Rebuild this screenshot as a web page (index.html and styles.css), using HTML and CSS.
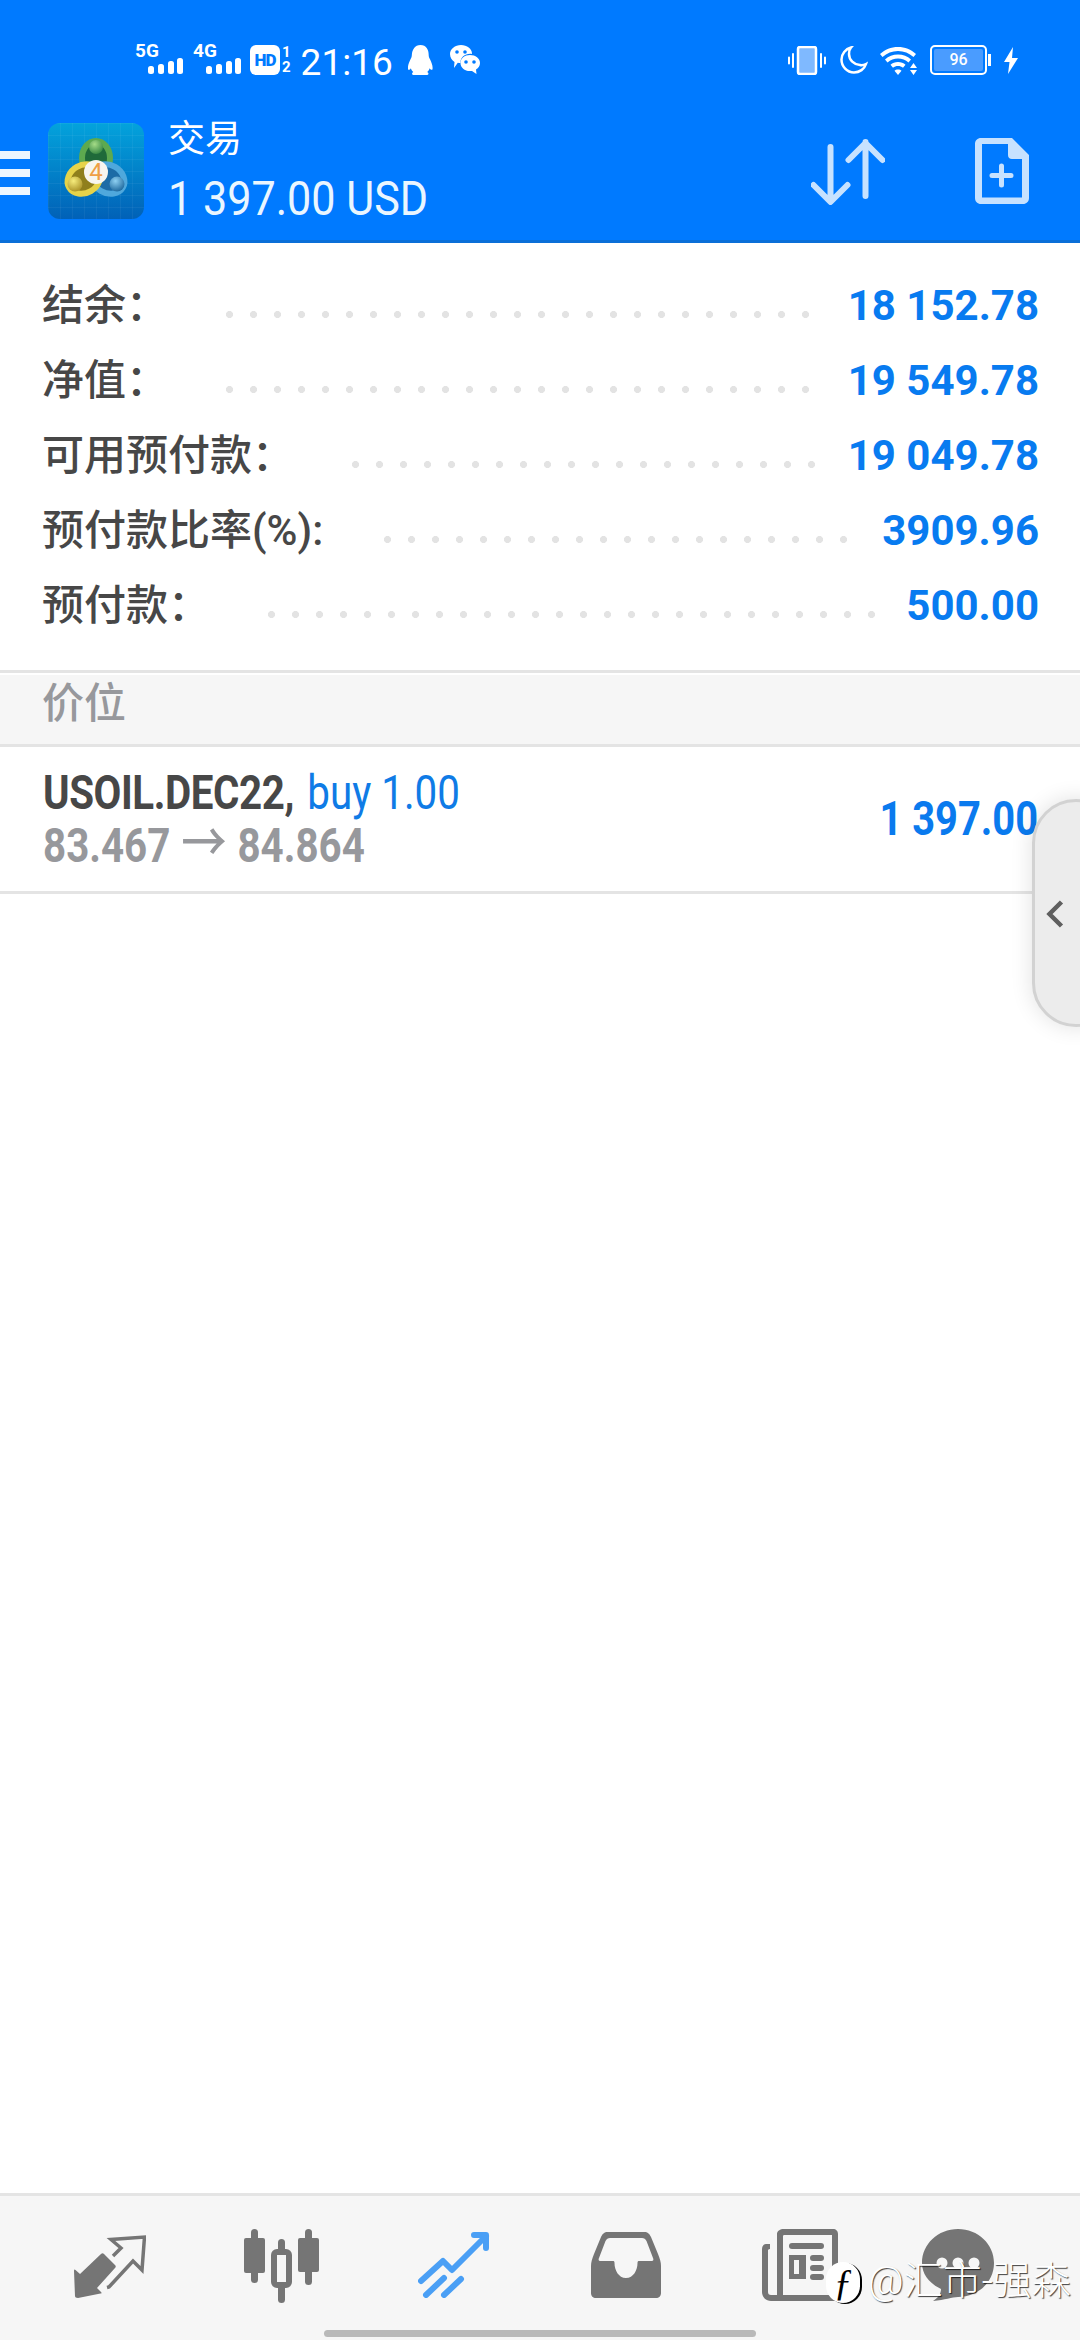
FILE: index.html
```html
<!DOCTYPE html>
<html>
<head>
  <meta http-equiv="CONTENT-TYPE" content="text/html; charset=UTF-8">
  <link rel="stylesheet" href="styles.css">
  <title>交易</title>
</head>
<body>
  <div class="phone">
    <header class="top">
      <div class="status">
        <div class="status-left">
          <div class="net"><span class="net-name">5G</span><svg class="bars" width="35" height="16" viewBox="0 0 35 16"><g fill="#fff"><rect x="0" y="8" width="6" height="8" rx="2.500"/><rect x="10" y="6" width="6" height="10" rx="2.500"/><rect x="20" y="3" width="6" height="13" rx="2.500"/><rect x="29" y="0" width="6" height="16" rx="2.500"/></g></svg></div>
          <div class="net net2"><span class="net-name">4G</span><svg class="bars" width="35" height="16" viewBox="0 0 35 16"><g fill="#fff"><rect x="0" y="8" width="6" height="8" rx="2.500"/><rect x="10" y="6" width="6" height="10" rx="2.500"/><rect x="20" y="3" width="6" height="13" rx="2.500"/><rect x="29" y="0" width="6" height="16" rx="2.500"/></g></svg></div>
          <div class="hd"><span class="hd-box">HD</span><span class="hd-nums"><span>1</span><span>2</span></span></div>
          <span class="clock">21:16</span>
          <svg class="ic-qq" width="25" height="30" viewBox="0 0 26 31"><path fill="#fff" d="M13 0c6 0 8.500 5 8.500 10 0 2 .5 3 1.500 5 1.500 3 3 7 2.500 10-.5 1.500-2 .5-3-1-.5 2-1.500 3-2.500 4 1.500 1 2 2.500 0 3H5.500c-2-.5-1.500-2 0-3-1-1-2-2-2.500-4-1 1.500-2.500 2.500-3 1C-.5 22 1 18 2.500 15c1-2 1.500-3 1.500-5C4.500 5 7 0 13 0z"/></svg>
          <svg class="ic-wechat" width="30" height="30" viewBox="0 0 30 30"><path fill="#fff" d="M11 0c6 0 11 4 11 8.500v.5c-6-1-12 3-11.500 9-1 0-1.800 0-2.700-.2L4 23l.5-6C2 15.500 0 12.500 0 9 0 4 5 0 11 0z"/><circle cx="7" cy="7" r="1.800" fill="#007aff"/><circle cx="15" cy="7" r="1.800" fill="#007aff"/><path fill="#fff" d="M20 10c5.500 0 10 3.500 10 8 0 2.800-1.500 5-4 6.500l.5 4.500-4.500-3c-.6.100-1.300.100-2 .1-5.500 0-9.500-3.600-9.500-8.100S14.500 10 20 10z"/><circle cx="16" cy="17" r="1.800" fill="#007aff"/><circle cx="24" cy="17" r="1.800" fill="#007aff"/></svg>
        </div>
        <div class="status-right">
          <svg class="ic-vib" width="38" height="29" viewBox="0 0 38 29"><rect x="10" y="1" width="18" height="27" rx="2" fill="#7fb9ff" stroke="#fff" stroke-width="2.500"/><path d="M5 8v13M1 11.500v6M33 8v13M37 11.500v6" stroke="#fff" stroke-width="2" stroke-linecap="round" fill="none"/></svg>
          <svg class="ic-moon" width="28" height="28" viewBox="0 0 28 28"><path fill="none" stroke="#fff" stroke-width="2.500" d="M11 1.500C5.500 3 1.500 8 1.500 13.500c0 7 5.500 13 12.500 13 5.500 0 10.500-3.500 12-8.500-2 1-4 1.500-6 1-6-.5-11-5-11-11 0-2.500.7-5 2-6.500z"/></svg>
          <svg class="ic-wifi" width="38" height="29" viewBox="0 0 38 29"><path fill="#fff" d="M18 0c7 0 13 2.500 18 7l-2.500 3C29 6 24 4 18 4S7 6 2.500 10L0 7C5 2.500 11 0 18 0z"/><path fill="#fff" d="M18 7.500c5 0 9.500 1.800 13 5L28.500 15.500C25.500 13 22 11.500 18 11.500S10.500 13 7.500 15.500L5 12.500c3.500-3.200 8-5 13-5z"/><path fill="#fff" d="M18 15c3 0 5.500 1 7.500 2.800L23 20.800c-1.500-1.200-3-1.800-5-1.800s-3.500.6-5 1.800l-2.500-3C12.500 16 15 15 18 15z"/><path fill="#fff" d="M18 22.500c1.500 0 2.700.4 3.500 1.200L18 28l-3.500-4.300c.8-.8 2-1.200 3.500-1.200z"/><path fill="#fff" d="M33.500 16l3.500 5h-7zM30 23h7l-3.500 5z"/></svg>
          <div class="battery"><span class="batt-box"><span class="batt-fill">96</span></span><span class="batt-tip"></span></div>
          <svg class="ic-bolt" width="14" height="27" viewBox="0 0 14 27"><path fill="#fff" d="M9 0L0 15h5.500L4 27l10-16H8z"/></svg>
        </div>
      </div>
      <div class="toolbar">
        <div class="menu"><span></span><span></span><span></span></div>
        <svg class="logo" width="96" height="96" viewBox="0 0 96 96">
          <defs>
            <linearGradient id="logoBg" x1="0" y1="0" x2="0" y2="1"><stop offset="0" stop-color="#03a3dc"/><stop offset="1" stop-color="#0161b7"/></linearGradient>
            <pattern id="logoGrid" width="12" height="12" patternUnits="userSpaceOnUse"><path d="M12 0H0V12" fill="none" stroke="#fff" stroke-opacity=".09" stroke-width="1"/></pattern>
            <radialGradient id="ballGreen" cx=".4" cy=".3" r=".8"><stop offset="0" stop-color="#a5dc87"/><stop offset="1" stop-color="#2c7f3d"/></radialGradient>
            <radialGradient id="ballYellow" cx=".4" cy=".3" r=".8"><stop offset="0" stop-color="#f6ec7c"/><stop offset="1" stop-color="#a38a1f"/></radialGradient>
            <radialGradient id="ballBlue" cx=".4" cy=".3" r=".8"><stop offset="0" stop-color="#8ed0f2"/><stop offset="1" stop-color="#125d94"/></radialGradient>
          </defs>
          <rect width="96" height="96" rx="12" fill="url(#logoBg)"/>
          <rect width="96" height="96" rx="12" fill="url(#logoGrid)"/>
          <ellipse cx="48" cy="35" rx="14" ry="17" fill="#1f6a3a" stroke="#5da94f" stroke-width="6"/>
          <ellipse cx="48" cy="35" rx="14" ry="17" fill="#1c6ba6" stroke="#4fa8dc" stroke-width="6" transform="rotate(120 48 49)"/>
          <ellipse cx="48" cy="35" rx="14" ry="17" fill="#8f7f1c" stroke="#e6d34a" stroke-width="6" transform="rotate(240 48 49)"/>
          <circle cx="48" cy="24" r="7" fill="url(#ballGreen)"/>
          <circle cx="27" cy="61" r="7.500" fill="url(#ballYellow)"/>
          <circle cx="69" cy="61" r="7.500" fill="url(#ballBlue)"/>
          <circle cx="48" cy="49" r="12" fill="#f7f5ef"/>
          <text x="48" y="57" class="logo-four">4</text>
        </svg>
        <div class="title">
          <span class="title-top">交易</span>
          <span class="title-sum">1 397.00 USD</span>
        </div>
        <svg class="ic-sort" width="74" height="66" viewBox="0 0 74 66"><path d="M20 8v54M3 46l17 17 17-17M55 3v54M38 21L55 4l17 17" fill="none" stroke="#c7e2ff" stroke-width="6" stroke-linecap="round" stroke-linejoin="round" transform="translate(-.5 0)"/></svg>
        <svg class="ic-new" width="54" height="66" viewBox="0 0 54 66"><path fill-rule="evenodd" fill="#c7e2ff" d="M6 0h31l17 17v43c0 3.500-2.500 6-6 6H6c-3.500 0-6-2.500-6-6V6C0 2.500 2.500 0 6 0zm1 6v53.500h40V21H37c-2.500 0-4-1.500-4-4V6z"/><path d="M26.500 28v19M17 37.500h19" stroke="#c7e2ff" stroke-width="5" stroke-linecap="round"/></svg>
      </div>
    </header>

    <section class="summary">
      <div class="row"><span class="row-label">结余：</span><span class="dots" style="--n:25"></span><span class="row-val">18 152.78</span></div>
      <div class="row"><span class="row-label">净值：</span><span class="dots" style="--n:25"></span><span class="row-val">19 549.78</span></div>
      <div class="row"><span class="row-label">可用预付款：</span><span class="dots" style="--n:20"></span><span class="row-val">19 049.78</span></div>
      <div class="row"><span class="row-label">预付款比率(%):</span><span class="dots dots-far" style="--n:20"></span><span class="row-val">3909.96</span></div>
      <div class="row"><span class="row-label">预付款：</span><span class="dots" style="--n:26"></span><span class="row-val">500.00</span></div>
    </section>

    <div class="section-head">价位</div>

    <div class="position">
      <div class="pos-info">
        <div class="pos-line"><b class="symbol">USOIL.DEC22,</b> <span class="side">buy 1.00</span></div>
        <div class="pos-prices">83.467 <span class="arrow">→</span> 84.864</div>
      </div>
      <span class="pos-profit">1 397.00</span>
      <div class="handle"><svg width="18" height="28" viewBox="0 0 18 28"><path d="M15.500 2L3.500 14l12 12" fill="none" stroke="#5f5f5f" stroke-width="4.500"/></svg></div>
    </div>

    <div class="spacer"></div>

    <nav class="tabs">
      <svg class="tab tab-trade" width="72" height="64" viewBox="0 0 72 64"><path fill="#757575" d="M27 19c1-1 2-1 3 0l11 11c1 1 1 2 0 3L23 53l4 4c1 1 .5 1.500-.5 1.500L4 63c-2 0-3-1-3-2L0 36c0-1.500.5-2 1.500-1L6 39z"/><path fill="none" stroke="#757575" stroke-width="3.500" d="M33 52.500l2-.5L59 26l9 9 2.500-33L37 4.500l10 8.500-8 8"/></svg>
      <svg class="tab tab-bars" width="75" height="74" viewBox="0 0 75 74"><g fill="#757575"><rect x="7" y="0" width="7" height="54" rx="3.500"/><rect x="0" y="9" width="21" height="35" rx="2"/><rect x="61" y="0" width="7" height="56" rx="3.500"/><rect x="54" y="9" width="21" height="34" rx="2"/><rect x="34" y="10" width="7" height="64" rx="3.500"/></g><rect x="30" y="23" width="15" height="33" rx="3" fill="#f6f6f6" stroke="#757575" stroke-width="6"/></svg>
      <svg class="tab tab-chart" width="72" height="66" viewBox="0 0 72 66"><path d="M3 49l22-20 9 9L68 4M56 3h12v13M8 63l18-17M26 63l17-16" fill="none" stroke="#4a9ff5" stroke-width="6" stroke-linecap="round" stroke-linejoin="round"/></svg>
      <svg class="tab tab-inbox" width="72" height="66" viewBox="0 0 70 66"><path fill-rule="evenodd" fill="#757575" d="M17 0h36c4 0 5.500 2 7 5l7 17c2 5 3 8 3 12v27c0 3-2 5-5 5H5c-3 0-5-2-5-5V34c0-4 1-7 3-12l7-17c1.500-3 3-5 7-5zm2 6c-2 0-3.500 1-4.500 3L8 26c-1 2 0 3 2 3h12c1 0 1.500.5 1.500 2 0 7 4 15 11.500 15s11.500-8 11.500-15c0-1.500.5-2 1.500-2h12c2 0 3-1 2-3L55.500 9c-1-2-2.500-3-4.500-3z"/></svg>
      <svg class="tab tab-news" width="76" height="72" viewBox="0 0 76 72"><path fill-rule="evenodd" fill="#757575" d="M22 0h49c3 0 5 2 5 5v62c0 3-2 5-5 5H9c-5 0-9-4-9-9V21c0-5 2-6 5-6h3v5c-2 0-2 1-2 2v41c0 2 1 3 3 3h6V5c0-3 3-5 7-5zm0 6c-1 0-1 1-1 2v58h49V6z"/><rect x="27" y="14" width="35" height="6" rx="3" fill="#757575"/><path fill-rule="evenodd" fill="#757575" d="M27 26h17v24H27zm5 5v14h5V31z"/><g fill="#757575"><rect x="48" y="26" width="14" height="6" rx="3"/><rect x="48" y="36" width="14" height="6" rx="3"/><rect x="48" y="45" width="14" height="6" rx="3"/></g></svg>
      <svg class="tab tab-chat" width="72" height="72" viewBox="0 0 72 72"><path fill="#757575" d="M36 0c20 0 36 15 36 34S56 68 36 68c-6 0-13 3-25 4 5-3 8-7 8-12C7 54 0 45 0 34 0 15 16 0 36 0z"/><g fill="#f6f6f6"><circle cx="20" cy="34" r="5.500"/><circle cx="36" cy="34" r="5.500"/><circle cx="52" cy="34" r="5.500"/></g></svg>
      <div class="watermark"><span class="wm-logo">ƒ</span><span class="wm-text">@汇市-强森</span></div>
    </nav>
    <div class="home-bar"></div>
  </div>
</body>
</html>
```

FILE: styles.css
```css
* {
  margin: 0;
  padding: 0;
  box-sizing: border-box;
}

body {
  width: 1080px;
  height: 2340px;
  overflow: hidden;
  background: white;
  font-family: Roboto, "Noto Sans CJK SC", sans-serif;
}

.phone {
  width: 100%;
  height: 100%;
  display: flex;
  flex-direction: column;
  position: relative;
}

/* top blue part */
.top {
  height: 243px;
  background: #007aff;
  border-bottom: 3px solid #0a6fd8;
  flex-shrink: 0;
  color: white;
}

.status {
  height: 118px;
  display: flex;
  justify-content: space-between;
  padding: 43px 62px 0 135px;
}

.status-left, .status-right {
  display: flex;
  align-items: flex-start;
}

.net {
  position: relative;
  width: 58px;
  height: 32px;
}

.net2 {
  width: 57px;
}

.net-name {
  position: absolute;
  left: 0;
  top: 0;
  font-size: 19px;
  font-weight: 700;
  line-height: 15px;
}

.bars {
  position: absolute;
  left: 13px;
  top: 15px;
}

.hd {
  display: flex;
  margin-top: 2px;
}

.hd-box {
  width: 30px;
  height: 30px;
  background: white;
  color: #007aff;
  border-radius: 6px;
  font-size: 17px;
  font-weight: 900;
  line-height: 30px;
  text-align: center;
  letter-spacing: -1px;
}

.hd-nums {
  display: flex;
  flex-direction: column;
  font-size: 15px;
  font-weight: 700;
  line-height: 15px;
  margin-left: 2px;
}

.clock {
  font-size: 37px;
  line-height: 40px;
  margin-left: 10px;
  width: 91px;
}

.ic-qq {
  margin: 2px 0 0 16px;
}

.ic-wechat {
  margin: 2px 0 0 17px;
}

.status-right {
  padding-top: 2px;
}

.ic-vib {
  margin-top: 1px;
}

.ic-moon {
  margin: 1px 0 0 14px;
}

.ic-wifi {
  margin: 2px 0 0 12px;
}

.battery {
  display: flex;
  align-items: center;
  margin-left: 12px;
  height: 30px;
}

.batt-box {
  width: 57px;
  height: 30px;
  border: 2.500px solid white;
  border-radius: 5px;
  padding: 2px;
  display: block;
}

.batt-fill {
  display: block;
  height: 100%;
  background: #4a9cff;
  border-radius: 2px;
  font-size: 16px;
  line-height: 21px;
  text-align: center;
  font-weight: 500;
}

.batt-tip {
  width: 3px;
  height: 12px;
  background: white;
  margin-left: 1px;
}

.ic-bolt {
  margin: 2px 0 0 13px;
}

.toolbar {
  height: 122px;
  display: flex;
  align-items: flex-start;
}

.menu {
  width: 30px;
  display: flex;
  flex-direction: column;
  gap: 10px;
  margin-top: 33px;
}

.menu span {
  height: 8px;
  background: #ecf6ff;
}

.logo {
  margin: 5px 0 0 18px;
}

.logo-four {
  font-family: Roboto, sans-serif;
  font-size: 24px;
  fill: #ef9f45;
  text-anchor: middle;
}

.title {
  margin-left: 24px;
  flex: 1;
  display: flex;
  flex-direction: column;
}

.title-top {
  font-size: 37px;
  line-height: 44px;
  height: 54px;
}

.title-sum {
  font-size: 49px;
  line-height: 54px;
  color: #eaf6ff;
  transform: scaleX(.88);
  transform-origin: left;
  white-space: nowrap;
}

.ic-sort {
  margin: 21px 0 0 0;
}

.ic-new {
  margin: 20px 51px 0 90px;
}

/* account rows */
.summary {
  padding: 25px 0 0;
  height: 427px;
  flex-shrink: 0;
}

.row {
  height: 75px;
  display: flex;
  align-items: center;
  padding: 0 41px 0 42px;
  color: #474747;
}

.row-label {
  font-size: 42px;
  font-weight: 500;
  line-height: 50px;
  white-space: nowrap;
}

.dots {
  flex: none;
  width: calc(var(--n) * 24px - 17px);
  height: 7px;
  margin: 18px 0 0 58px;
  background-image: radial-gradient(circle at 3.500px 3.500px, #e3e3e3 3.300px, transparent 3.800px);
  background-size: 24px 7px;
  background-repeat: repeat-x;
}

.dots-far {
  margin-left: 61px;
}

.row-val {
  margin-left: auto;
  font-size: 42px;
  font-weight: 700;
  color: #087bf0;
  white-space: nowrap;
}

.section-head {
  height: 77px;
  background: #f6f6f6;
  border-top: 3px solid #e4e4e4;
  border-bottom: 3px solid #e4e4e4;
  box-shadow: inset 0 2px 0 white;
  color: #97989c;
  font-size: 42px;
  font-weight: 500;
  line-height: 61px;
  padding-left: 42px;
  flex-shrink: 0;
}

.position {
  height: 147px;
  border-bottom: 3px solid #e4e4e4;
  display: flex;
  align-items: center;
  justify-content: space-between;
  padding: 0 42px 0 43px;
  position: relative;
  flex-shrink: 0;
}

.pos-info {
  font-size: 48px;
  line-height: 52px;
  white-space: nowrap;
}

.pos-line, .pos-prices {
  transform: scaleX(.84);
  transform-origin: left;
}

.pos-line {
  margin-top: 1px;
}

.symbol {
  color: #474747;
  font-weight: 700;
  letter-spacing: -.5px;
}

.side {
  color: #0f7be6;
  margin-left: 4px;
}

.pos-prices {
  color: #97989c;
  font-weight: 700;
}

.arrow {
  font-family: "Noto Sans CJK SC", sans-serif;
  font-weight: 500;
  font-size: 54px;
  line-height: 40px;
  margin: 0 1px;
}

.pos-profit {
  font-size: 48px;
  font-weight: 700;
  color: #0a7aee;
  transform: scaleX(.83);
  transform-origin: right;
  white-space: nowrap;
  margin-top: -2px;
}

/* pull tab on the right edge */
.handle {
  position: absolute;
  right: -40px;
  top: 52px;
  width: 88px;
  height: 228px;
  background: #ececec;
  border: 3px solid #d2d2d2;
  border-radius: 46px;
  box-shadow: 0 0 22px rgba(0, 0, 0, .12);
  padding: 98px 0 0 11px;
}

.handle svg {
  display: block;
}

.spacer {
  flex: 1;
}

/* bottom tabs */
.tabs {
  height: 147px;
  background: #f6f6f6;
  border-top: 3px solid #e4e4e4;
  position: relative;
  display: flex;
  align-items: flex-start;
  flex-shrink: 0;
}

.tab {
  flex-shrink: 0;
}

.tab-trade {
  margin: 39px 0 0 74px;
}

.tab-bars {
  margin: 33px 0 0 98px;
}

.tab-chart {
  margin: 36px 0 0 99px;
}

.tab-inbox {
  margin: 36px 0 0 100px;
}

.tab-news {
  margin: 33px 0 0 100px;
}

.tab-chat {
  margin: 33px 0 0 84px;
}

.wm-logo {
  position: absolute;
  left: 826px;
  top: 66px;
  width: 34px;
  height: 41px;
  background: white;
  border-radius: 17px;
  box-shadow: 2px 1px 0 black;
  color: black;
  font-size: 38px;
  line-height: 41px;
  text-align: center;
  font-family: "Liberation Serif", serif;
  font-style: italic;
}

.wm-text {
  position: absolute;
  left: 868px;
  top: 59px;
  font-size: 39px;
  line-height: 52px;
  white-space: nowrap;
  color: white;
  font-weight: 300;
  text-shadow: 1px 1px 1px rgba(0, 0, 0, .75);
}

.home-bar {
  position: absolute;
  left: 324px;
  bottom: 3px;
  width: 432px;
  height: 7px;
  border-radius: 4px;
  background: #b9b9b9;
}
```
